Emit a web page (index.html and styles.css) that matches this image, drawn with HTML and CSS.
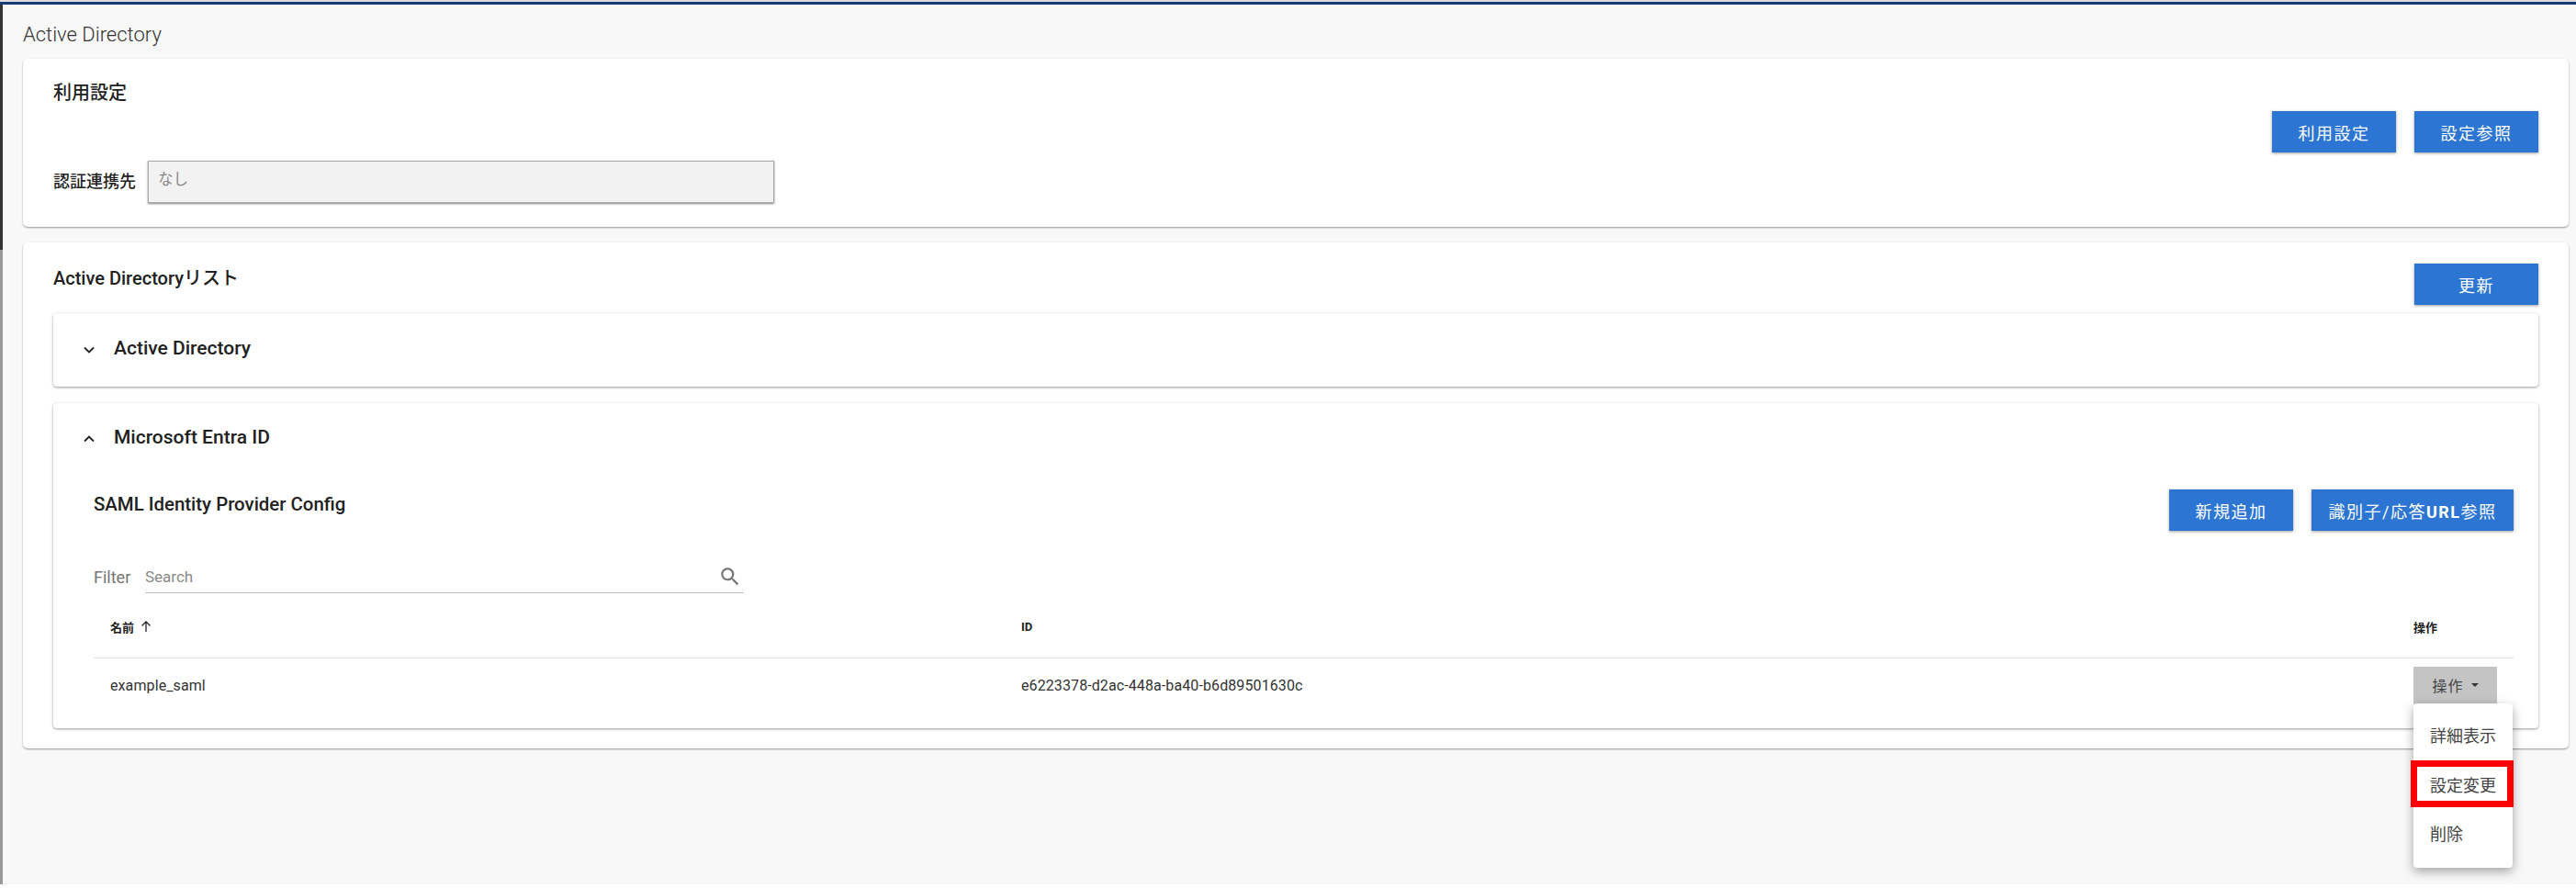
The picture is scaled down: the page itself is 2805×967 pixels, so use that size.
FILE: index.html
```html
<!DOCTYPE html>
<html lang="ja">
<head>
    <meta charset="UTF-8">
    <title>Active Directory</title>
    <link rel="stylesheet" href="styles.css">
</head>
<body>
    <div class="page">
        <h1 class="page-title">Active Directory</h1>

        <section class="card card-usage">
            <div class="usage-left">
                <h2 class="card-title">利用設定</h2>
                <div class="auth-row">
                    <label class="auth-label">認証連携先</label>
                    <div class="auth-value">なし</div>
                </div>
            </div>
            <div class="btn-group usage-buttons">
                <button class="btn">利用設定</button>
                <button class="btn">設定参照</button>
            </div>
        </section>

        <section class="card card-list">
            <div class="list-head">
                <h2 class="card-title">Active Directoryリスト</h2>
                <button class="btn">更新</button>
            </div>

            <div class="panel panel-closed">
                <svg class="chevron" viewBox="0 0 14 10"><path d="M2 2.5l5 5 5-5" /></svg>
                <span class="panel-title">Active Directory</span>
            </div>

            <div class="panel panel-open">
                <div class="panel-head">
                    <svg class="chevron" viewBox="0 0 14 10"><path d="M2 7.5l5-5 5 5" /></svg>
                    <span class="panel-title">Microsoft Entra ID</span>
                </div>

                <div class="saml-head">
                    <h3 class="saml-title">SAML Identity Provider Config</h3>
                    <div class="btn-group">
                        <button class="btn">新規追加</button>
                        <button class="btn btn-wide">識別子/応答<b>URL</b>参照</button>
                    </div>
                </div>

                <div class="filter-row">
                    <span class="filter-label">Filter</span>
                    <div class="filter-box">
                        <span class="filter-hint">Search</span>
                        <svg class="search-icon" viewBox="0 0 24 24"><path d="M15.5 14h-.79l-.28-.27A6.47 6.47 0 0 0 16 9.5 6.5 6.5 0 1 0 9.5 16c1.61 0 3.09-.59 4.23-1.57l.27.28v.79l5 4.99L20.49 19l-4.99-5zm-6 0C7.01 14 5 11.99 5 9.5S7.01 5 9.5 5 14 7.01 14 9.5 11.99 14 9.5 14z" /></svg>
                    </div>
                </div>

                <div class="table-row table-header">
                    <div class="col-name">名前 <svg class="sort-icon" viewBox="0 0 14 14"><path d="M7 13V2M2.5 6.5L7 2l4.5 4.5" /></svg></div>
                    <div class="col-id">ID</div>
                    <div class="col-action">操作</div>
                </div>
                <div class="table-row table-body">
                    <div class="col-name">example_saml</div>
                    <div class="col-id">e6223378-d2ac-448a-ba40-b6d89501630c</div>
                    <div class="col-action">
                        <button class="action-btn">操作<span class="caret"></span></button>
                    </div>
                </div>
            </div>

            <ul class="menu">
                <li class="menu-item">詳細表示</li>
                <li class="menu-item">設定変更</li>
                <li class="menu-item">削除</li>
            </ul>
            <div class="highlight"></div>
        </section>
    </div>
</body>
</html>
```

FILE: styles.css
```css
body {
    margin: 0;
    background: #fff;
    color: #212121;
    font-family: Roboto, "Noto Sans CJK JP", sans-serif;
    overflow: hidden;
}

/* left edge of the window behind the page is dark at the top, grey below */
.page {
    height: 958px;
    margin-top: 2px;
    padding: 0 8px 0 25px;
    background: linear-gradient(#333 267px, #999 267px) left top / 3px 100% no-repeat, #f8f8f8;
    border-top: 3px solid #1b3a73;
    box-shadow: 0 -2px 0 #ddd;
}

.page-title {
    margin: 0;
    height: 59px;
    font-size: 22px;
    font-weight: 300;
    line-height: 65px;
    color: #333;
}

.card {
    background: #fff;
    border-radius: 5px;
    box-shadow: 0 1px 2px rgba(0, 0, 0, 0.4);
}

.card-title {
    margin: 0;
    font-size: 20px;
    font-weight: 500;
}

.card-usage {
    height: 183px;
    padding: 0 33px;
    display: flex;
    justify-content: space-between;
    box-sizing: border-box;
}

.usage-left {
    padding-top: 21px;
}

.usage-buttons {
    padding-top: 57px;
}

.auth-row {
    display: flex;
    align-items: center;
    margin-top: 61px;
}

.auth-label {
    width: 103px;
    margin-bottom: 4px;
    font-size: 18px;
    font-weight: 500;
}

.auth-value {
    width: 670px;
    height: 44px;
    padding-left: 10px;
    background: #f2f2f2;
    border: 1px solid #aaa;
    box-shadow: 0 1px 2px rgba(0, 0, 0, 0.5);
    font-size: 16.5px;
    line-height: 40px;
    color: #888;
}

.btn-group {
    display: flex;
    gap: 20px;
    align-items: flex-start;
}

.btn {
    width: 135px;
    height: 45px;
    padding: 0;
    border: none;
    background: #2c75d2;
    color: #fff;
    font-family: inherit;
    font-size: 18px;
    letter-spacing: 1.5px;
    box-shadow: 0 1px 3px rgba(0, 0, 0, 0.4);
}

.btn-wide {
    width: 220px;
}

.card-list {
    position: relative;
    height: 551px;
    margin-top: 17px;
    padding: 0 33px;
    box-sizing: border-box;
}

.list-head {
    height: 77px;
    display: flex;
    justify-content: space-between;
    align-items: flex-start;
    padding-top: 23px;
    box-sizing: border-box;
}

.panel {
    background: #fff;
    border-radius: 4px;
    box-shadow: 0 1px 3px rgba(0, 0, 0, 0.4);
}

.panel-title {
    margin-bottom: 4px;
    font-size: 21px;
    font-weight: 500;
}

.saml-title {
    margin: 4px 0 0;
    font-size: 20.4px;
    font-weight: 500;
}

.chevron {
    width: 14px;
    height: 10px;
    margin-right: 20px;
    fill: none;
    stroke: #222;
    stroke-width: 1.8;
}

.panel-closed {
    height: 80px;
    display: flex;
    align-items: center;
    padding-left: 32px;
}

.panel-open {
    height: 354px;
    margin-top: 18px;
    padding: 0 27px 0 44px;
    box-sizing: border-box;
}

.panel-head {
    height: 77px;
    margin-left: -12px;
    display: flex;
    align-items: center;
}

.saml-head {
    display: flex;
    justify-content: space-between;
    align-items: flex-start;
    padding-top: 17px;
}

.filter-row {
    display: flex;
    align-items: flex-end;
    margin-top: 33px;
}

.filter-label {
    width: 56px;
    height: 34px;
    font-size: 18px;
    line-height: 34px;
    color: #757575;
}

.filter-box {
    width: 652px;
    height: 34px;
    display: flex;
    justify-content: space-between;
    align-items: center;
    border-bottom: 1px solid #bbb;
}

.filter-hint {
    font-size: 17px;
    color: #8a8a8a;
}

.search-icon {
    width: 26px;
    height: 26px;
    margin-right: 2px;
    fill: #757575;
}

.table-row {
    display: flex;
}

.table-header {
    height: 68px;
    padding-top: 2px;
    align-items: center;
    border-bottom: 1px solid #e3e3e3;
    font-size: 13px;
    font-weight: 700;
}

.table-body {
    height: 58px;
    padding-bottom: 2px;
    font-size: 16px;
    letter-spacing: 0.1px;
    align-items: center;
    color: #333;
}

.col-name {
    width: 1010px;
    padding-left: 18px;
    box-sizing: border-box;
    display: flex;
    align-items: center;
    gap: 6px;
}

.col-id {
    width: 1516px;
}

.sort-icon {
    width: 14px;
    height: 14px;
    fill: none;
    stroke: #222;
    stroke-width: 1.3;
}

.action-btn {
    width: 91px;
    height: 41px;
    padding: 0;
    border: none;
    background: #c4c4c4;
    color: #444;
    font-family: inherit;
    font-size: 16px;
    letter-spacing: 1px;
    display: flex;
    align-items: center;
    justify-content: center;
    gap: 8px;
}

.caret {
    width: 0;
    height: 0;
    border-left: 4px solid transparent;
    border-right: 4px solid transparent;
    border-top: 4px solid #333;
}

/* dropdown hangs over the cards */
.menu {
    position: absolute;
    left: 2603px;
    top: 502px;
    width: 108px;
    height: 179px;
    margin: 0;
    padding: 9px 0 0;
    box-sizing: border-box;
    list-style: none;
    background: #fff;
    border-radius: 4px;
    box-shadow: 0 4px 12px rgba(0, 0, 0, 0.35);
}

.menu-item {
    height: 53.5px;
    padding-left: 18px;
    font-size: 18px;
    line-height: 53.5px;
    color: #444;
}

/* red marker drawn on top of the screenshot */
.highlight {
    position: absolute;
    left: 2600px;
    top: 564px;
    width: 112px;
    height: 51px;
    box-sizing: border-box;
    border: 7px solid #f00;
}
```
